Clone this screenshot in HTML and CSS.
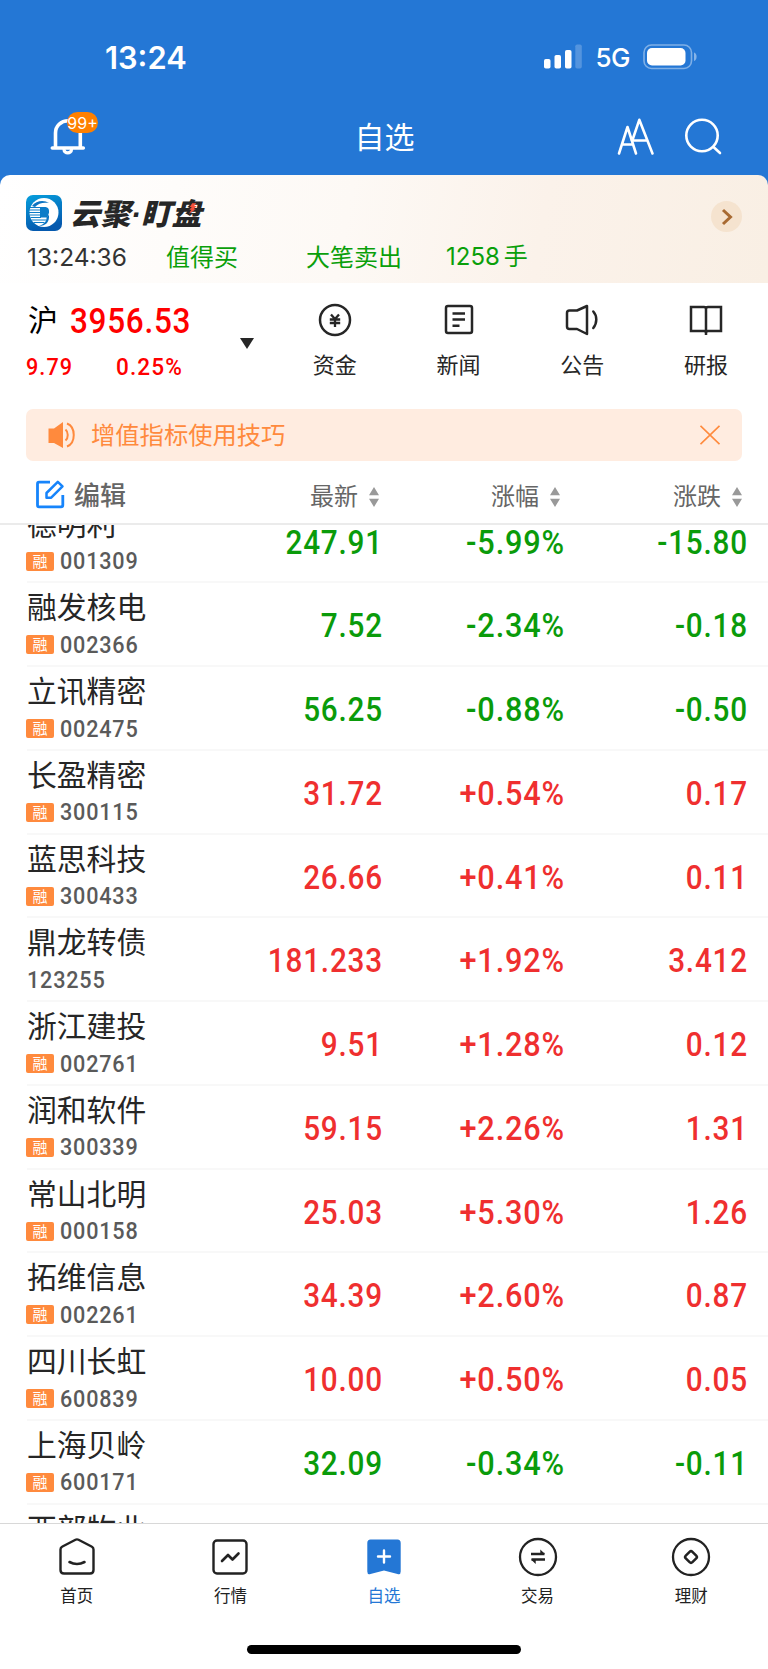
FILE: index.html
```html
<!DOCTYPE html>
<html lang="zh-CN">
<head>
    <meta charset="UTF-8">
    <meta name="viewport" content="width=device-width, initial-scale=1.0">
    <title>自选</title>
    <link rel="stylesheet" href="styles.css">
</head>
<body>
    <header class="header">
        <div class="status-bar">
            <span class="status-time">13:24</span>
            <div class="status-right">
                <svg class="signal" width="38" height="25" viewBox="0 0 38 25" fill="#fff">
                    <rect x="0" y="15" width="6.5" height="9.5" rx="1.8"/>
                    <rect x="10.5" y="11" width="6.5" height="13.5" rx="1.8"/>
                    <rect x="21" y="6" width="6.5" height="18.5" rx="1.8"/>
                    <rect x="31.3" y="0.5" width="6.5" height="24" rx="1.8" opacity="0.22"/>
                </svg>
                <span class="network">5G</span>
                <svg class="battery" width="55" height="26" viewBox="0 0 55 26">
                    <rect x="1" y="1" width="47.5" height="23.5" rx="7.5" fill="none" stroke="#fff" stroke-width="1.6" opacity="0.42"/>
                    <rect x="4" y="4" width="38.5" height="17.5" rx="5" fill="#fff"/>
                    <path d="M51 8.5c1.600 .6 2.600 2 2.600 4.200S52.600 16.500 51 17z" fill="#fff" opacity="0.45"/>
                </svg>
            </div>
        </div>
        <div class="nav-bar">
            <div class="bell">
                <svg width="36" height="38" viewBox="0 0 36 38" fill="none" stroke="#fff" stroke-width="3.6" stroke-linecap="round">
                    <path d="M5.500 29V15C5.500 8 11 2.800 18 2.800S30.300 8 30.300 15V29"/>
                    <path d="M2.300 30H33.300"/>
                    <path d="M14 31.500C14 36 21.500 36 21.500 31.500" stroke-width="3.200"/>
                </svg>
                <span class="bell-badge">99+</span>
            </div>
            <h1 class="nav-title">自选</h1>
            <div class="nav-actions">
                <svg width="38" height="38" viewBox="0 0 38 38" fill="none" stroke="#fff" stroke-width="2.600" stroke-linecap="round" stroke-linejoin="round">
                    <path d="M2 35.500L10.500 9L19 35.500M5.500 26.500H16"/>
                    <path d="M15.500 22L22.300 1.800L35.500 35.500M15 22.500H30"/>
                </svg>
                <svg width="38" height="38" viewBox="0 0 38 38" fill="none" stroke="#fff" stroke-width="2.600" stroke-linecap="round">
                    <circle cx="18" cy="17.500" r="15.700"/>
                    <path d="M29.500 29L36 35"/>
                </svg>
            </div>
        </div>
    </header>

    <section class="promo">
        <div class="promo-top">
            <svg class="promo-logo" width="36" height="36" viewBox="0 0 36 36">
                <defs>
                    <linearGradient id="logo-bg" x1="0" y1="0" x2="0.300" y2="1">
                        <stop offset="0" stop-color="#069fdd"/>
                        <stop offset="1" stop-color="#0559ae"/>
                    </linearGradient>
                </defs>
                <rect width="36" height="36" rx="7" fill="url(#logo-bg)"/>
                <circle cx="18" cy="17.500" r="14.500" fill="#fff"/>
                <path d="M14 12H19.500Q23 12.500 23 16V17.500Q22.500 21 20.500 22.500H14z" fill="#0c7cc8"/>
                <path d="M6 11C10 5.500 18 4.500 23 8C18 7 12 8 9 12M20.500 22C21 26 18 29.500 13 31C20 31 23.500 27 23 20" fill="#0c74c2"/>
                <path d="M3 12.500H14M3 15H14M3 17.500H14M3.500 20H14M4.500 22.500H15M5.500 25H20.500M7.500 27.500H18.500" stroke="#0c7cc8" stroke-width="1.100"/>
            </svg>
            <div class="promo-name">云聚<span class="promo-dot">·</span>盯盘
                <svg class="bolt" width="8" height="11" viewBox="0 0 10 13"><path d="M4 0H9L6.500 3.500H9.500L6 7.500H8.500L0 13L3 8H.5L3.500 4.500H1z" fill="#f4513b"/></svg>
            </div>
            <span class="promo-more">
                <svg width="12" height="18" viewBox="0 0 12 18" fill="none" stroke="#a86a32" stroke-width="3"><path d="M2 2L9.500 9L2 16"/></svg>
            </span>
        </div>
        <div class="promo-feed">
            <span class="feed-time">13:24:36</span>
            <span class="feed-stock">值得买</span>
            <span class="feed-event">大笔卖出</span>
            <span class="feed-volume">1258<span class="feed-unit">手</span></span>
        </div>
    </section>

    <section class="overview">
        <div class="index">
            <div class="index-main"><span class="index-name">沪</span><span class="index-value">3956.53</span></div>
            <div class="index-change"><span class="index-diff">9.79</span><span class="index-pct">0.25%</span></div>
            <span class="index-arrow"></span>
        </div>
        <div class="shortcuts">
            <div class="shortcut">
                <svg width="34" height="34" viewBox="0 0 34 34" fill="none" stroke="#262626" stroke-width="2.500">
                    <circle cx="17" cy="17" r="15"/>
                    <path d="M13 11.500L17 16L21 11.500M11.800 16.500H22.200M11.800 20H22.200M17 16V24" stroke-width="2.300"/>
                </svg>
                <span>资金</span>
            </div>
            <div class="shortcut">
                <svg width="34" height="34" viewBox="0 0 34 34" fill="none" stroke="#262626" stroke-width="2.500">
                    <rect x="4" y="3" width="26" height="27" rx="2"/>
                    <path d="M10.500 10.500H23M10.500 16.600H23M10.500 22.700H17.500"/>
                </svg>
                <span>新闻</span>
            </div>
            <div class="shortcut">
                <svg width="34" height="34" viewBox="0 0 34 34" fill="none" stroke="#262626" stroke-width="2.500" stroke-linejoin="round" stroke-linecap="round">
                    <path d="M4.500 7.500H12L22 3V31L12 26H4.500Q2 26 2 23.500V10Q2 7.500 4.500 7.500z"/>
                    <path d="M28.300 8.500C32.300 13 32.300 20 28.300 25"/>
                </svg>
                <span>公告</span>
            </div>
            <div class="shortcut">
                <svg width="34" height="34" viewBox="0 0 34 34" fill="none" stroke="#262626" stroke-width="2.500">
                    <path d="M2 4H15Q17 4 17 6Q17 4 19 4H32V28H19Q17 28 17 30Q17 28 15 28H2zM17 6V32"/>
                </svg>
                <span>研报</span>
            </div>
        </div>
    </section>

    <div class="notice">
        <svg width="28" height="28" viewBox="0 0 28 28" fill="none" stroke="#ff8a3d" stroke-width="2">
            <path d="M0.500 7.500H6L15 1V27L6 22H0.500z" fill="#ff8a3d" stroke="none"/>
            <path d="M17.500 8.500C20.500 11 20.500 17 17.500 19.500"/>
            <path d="M19 2.500C28 6 28 22 19 25.500"/>
        </svg>
        <span class="notice-text">增值指标使用技巧</span>
        <svg width="20" height="20" viewBox="0 0 20 20" stroke="#ff8a3d" stroke-width="1.700"><path d="M.5 .8L19.500 19.200M19.500 .8L.5 19.200"/></svg>
    </div>

    <div class="list-head">
        <div class="edit">
            <svg width="30" height="30" viewBox="0 0 30 30" fill="none" stroke="#1684fb" stroke-width="2.800" stroke-linejoin="round">
                <path d="M15 3.200H4Q2.500 3.200 2.500 5V26Q2.500 27.800 4 27.800H26Q27.800 27.800 27.800 26V16"/>
                <path d="M11.500 18.700V14L22.800 2.800L27.500 7.300L16.200 18.700z" stroke-width="2.500"/>
            </svg>
            <span>编辑</span>
        </div>
        <div class="sort"><span>最新</span><svg width="10" height="20" viewBox="0 0 10 20" fill="#999"><path d="M5 0L10 8.300H0zM0 11.700H10L5 20z"/></svg></div>
        <div class="sort"><span>涨幅</span><svg width="10" height="20" viewBox="0 0 10 20" fill="#999"><path d="M5 0L10 8.300H0zM0 11.700H10L5 20z"/></svg></div>
        <div class="sort"><span>涨跌</span><svg width="10" height="20" viewBox="0 0 10 20" fill="#999"><path d="M5 0L10 8.300H0zM0 11.700H10L5 20z"/></svg></div>
    </div>

    <main class="list">
        <div class="row down">
            <div class="stock"><div class="name">德明利</div><div class="code"><i class="tag">融</i><span>001309</span></div></div>
            <div class="num">247.91</div><div class="num">-5.99%</div><div class="num">-15.80</div>
        </div>
        <div class="row down">
            <div class="stock"><div class="name">融发核电</div><div class="code"><i class="tag">融</i><span>002366</span></div></div>
            <div class="num">7.52</div><div class="num">-2.34%</div><div class="num">-0.18</div>
        </div>
        <div class="row down">
            <div class="stock"><div class="name">立讯精密</div><div class="code"><i class="tag">融</i><span>002475</span></div></div>
            <div class="num">56.25</div><div class="num">-0.88%</div><div class="num">-0.50</div>
        </div>
        <div class="row up">
            <div class="stock"><div class="name">长盈精密</div><div class="code"><i class="tag">融</i><span>300115</span></div></div>
            <div class="num">31.72</div><div class="num">+0.54%</div><div class="num">0.17</div>
        </div>
        <div class="row up">
            <div class="stock"><div class="name">蓝思科技</div><div class="code"><i class="tag">融</i><span>300433</span></div></div>
            <div class="num">26.66</div><div class="num">+0.41%</div><div class="num">0.11</div>
        </div>
        <div class="row up">
            <div class="stock"><div class="name">鼎龙转债</div><div class="code"><span>123255</span></div></div>
            <div class="num">181.233</div><div class="num">+1.92%</div><div class="num">3.412</div>
        </div>
        <div class="row up">
            <div class="stock"><div class="name">浙江建投</div><div class="code"><i class="tag">融</i><span>002761</span></div></div>
            <div class="num">9.51</div><div class="num">+1.28%</div><div class="num">0.12</div>
        </div>
        <div class="row up">
            <div class="stock"><div class="name">润和软件</div><div class="code"><i class="tag">融</i><span>300339</span></div></div>
            <div class="num">59.15</div><div class="num">+2.26%</div><div class="num">1.31</div>
        </div>
        <div class="row up">
            <div class="stock"><div class="name">常山北明</div><div class="code"><i class="tag">融</i><span>000158</span></div></div>
            <div class="num">25.03</div><div class="num">+5.30%</div><div class="num">1.26</div>
        </div>
        <div class="row up">
            <div class="stock"><div class="name">拓维信息</div><div class="code"><i class="tag">融</i><span>002261</span></div></div>
            <div class="num">34.39</div><div class="num">+2.60%</div><div class="num">0.87</div>
        </div>
        <div class="row up">
            <div class="stock"><div class="name">四川长虹</div><div class="code"><i class="tag">融</i><span>600839</span></div></div>
            <div class="num">10.00</div><div class="num">+0.50%</div><div class="num">0.05</div>
        </div>
        <div class="row down">
            <div class="stock"><div class="name">上海贝岭</div><div class="code"><i class="tag">融</i><span>600171</span></div></div>
            <div class="num">32.09</div><div class="num">-0.34%</div><div class="num">-0.11</div>
        </div>
        <div class="row">
            <div class="stock"><div class="name">西部牧业</div></div>
        </div>
    </main>

    <nav class="tab-bar">
        <div class="tabs">
            <div class="tab">
                <svg width="40" height="40" viewBox="0 0 40 40" fill="none" stroke="#222" stroke-width="2.400" stroke-linecap="round" stroke-linejoin="round">
                    <path d="M3.500 12.500Q3.500 10.500 5 9.800L18.500 2.800Q20 2 21.500 2.800L35 9.800Q36.500 10.500 36.500 12.500V33Q36.500 36.500 33 36.500H7Q3.500 36.500 3.500 33z"/>
                    <path d="M12.500 25Q20 29 27.500 25" stroke-width="2.600"/>
                </svg>
                <span>首页</span>
            </div>
            <div class="tab">
                <svg width="40" height="40" viewBox="0 0 40 40" fill="none" stroke="#222" stroke-width="2.400" stroke-linecap="round" stroke-linejoin="round">
                    <rect x="3.500" y="3.500" width="33" height="33" rx="3.500"/>
                    <path d="M12 24L18 18L22.500 22.500L28.500 16.500" stroke-width="2.600"/>
                </svg>
                <span>行情</span>
            </div>
            <div class="tab active">
                <svg width="40" height="40" viewBox="0 0 40 40">
                    <path d="M6.500 2.500H33.500Q36.700 2.500 36.700 6V34.500Q36.700 38 33.500 37L20 33.500L6.500 37Q3.300 38 3.300 34.500V6Q3.300 2.500 6.500 2.500z" fill="#2477d5"/>
                    <path d="M20 13.500V25.500M14 19.500H26" stroke="#fff" stroke-width="2.400" stroke-linecap="round"/>
                </svg>
                <span>自选</span>
            </div>
            <div class="tab">
                <svg width="40" height="40" viewBox="0 0 40 40" fill="none" stroke="#222" stroke-width="2.300">
                    <circle cx="20" cy="20" r="18"/>
                    <path d="M13 17H26.500M27 22.500H13.500" stroke-width="2.700"/>
                    <path d="M22.300 17V12.500L27 17zM17.700 22.500V27L13 22.500z" fill="#222" stroke="none"/>
                </svg>
                <span>交易</span>
            </div>
            <div class="tab">
                <svg width="40" height="40" viewBox="0 0 40 40" fill="none" stroke="#222" stroke-width="2.300">
                    <circle cx="20" cy="20" r="18"/>
                    <rect x="15.300" y="15.300" width="9.400" height="9.400" rx="2" transform="rotate(45 20 20)" stroke-width="2.500"/>
                </svg>
                <span>理财</span>
            </div>
        </div>
        <div class="home-indicator"></div>
    </nav>
</body>
</html>
```

FILE: styles.css
```css
* {
    box-sizing: border-box;
}
body {
    margin: 0;
    width: 768px;
    height: 1669px;
    overflow: hidden;
    display: flex;
    flex-direction: column;
    background: #2477d5;
    font-family: "Noto Sans CJK SC", sans-serif;
    color: #262626;
}
svg {
    display: block;
    flex-shrink: 0;
}

/* header */
.header {
    height: 175px;
    flex-shrink: 0;
    color: #fff;
}
.status-bar {
    height: 114px;
    padding: 0 70px 0 105px;
    display: flex;
    align-items: center;
    justify-content: space-between;
    font-family: Inter, sans-serif;
}
.status-time {
    font-size: 30.8px;
    font-weight: 600;
}
.status-right {
    display: flex;
    align-items: center;
    margin-top: -1px;
}
.network {
    font-size: 26px;
    font-weight: 500;
    letter-spacing: -0.5px;
    margin: 2px 13px 0 13px;
}
.nav-bar {
    height: 46px;
    padding: 0 32px 0 50px;
    display: grid;
    grid-template-columns: 1fr auto 1fr;
    align-items: center;
}
.bell {
    position: relative;
}
.bell-badge {
    position: absolute;
    left: 17px;
    top: -6px;
    width: 31px;
    height: 21px;
    border-radius: 11px;
    background: #ff8000;
    font: 16px/22px Inter, sans-serif;
    text-align: center;
}
.nav-title {
    margin: -5px 0 0 -17px;
    font-size: 30px;
    font-weight: 400;
    line-height: 44px;
}
.nav-actions {
    display: flex;
    justify-content: flex-end;
    gap: 29px;
    margin-right: 14px;
}

/* promo card */
.promo {
    height: 108px;
    flex-shrink: 0;
    padding: 20px 26px 0;
    border-radius: 10px 10px 0 0;
    background: linear-gradient(100deg, #fff 0%, #fdf9f5 45%, #fbf2ea 70%, #f9efe4 100%);
}
.promo-top {
    display: flex;
    align-items: center;
    height: 36px;
}
.promo-name {
    position: relative;
    margin-left: 8px;
    font-size: 30px;
    font-weight: 800;
    font-style: italic;
    line-height: 36px;
    letter-spacing: 0.4px;
}
.promo-dot {
    font-family: "Liberation Sans", sans-serif;
}
.bolt {
    position: absolute;
    left: 119px;
    top: 9px;
}
.promo-more {
    width: 31px;
    height: 31px;
    margin: 7px 0 0 auto;
    border-radius: 50%;
    background: #f5e3cf;
    display: flex;
    align-items: center;
    justify-content: center;
}
.promo-feed {
    display: flex;
    margin-top: 7px;
    font-size: 24px;
    line-height: 36px;
    color: #0a9f0a;
}
.feed-time {
    width: 140px;
    padding: 1px 0 0 1px;
    font-family: Inter, sans-serif;
    font-size: 24.5px;
    color: #333;
}
.feed-stock {
    width: 140px;
}
.feed-event {
    width: 140px;
}
.feed-volume {
    padding-top: 1px;
    font-family: Inter, "Noto Sans CJK SC", sans-serif;
}
.feed-unit {
    margin-left: 4px;
}

/* index and shortcuts */
.overview {
    height: 126px;
    flex-shrink: 0;
    display: flex;
    background: #fff;
}
.index {
    position: relative;
    width: 273px;
    padding: 17px 0 0 26px;
    font-family: Roboto, sans-serif;
    font-weight: 500;
    color: #f00;
}
.index-main {
    display: flex;
    height: 40px;
    align-items: center;
}
.index-name {
    width: 44px;
    padding-left: 2px;
    margin-top: -4px;
    font-family: "Noto Sans CJK SC", sans-serif;
    font-size: 30px;
    line-height: 40px;
    font-weight: 400;
    color: #000;
}
.index-value {
    font-size: 35px;
    letter-spacing: 0.8px;
    padding-top: 3px;
    transform: scaleX(0.9);
    transform-origin: left;
}
.index-change {
    display: flex;
    margin-top: 13px;
    font-size: 24px;
    line-height: 28px;
    letter-spacing: 1.2px;
}
.index-diff {
    width: 90px;
    transform: scaleX(0.9);
    transform-origin: left;
}
.index-pct {
    transform: scaleX(0.94);
    transform-origin: left;
}
.index-arrow {
    position: absolute;
    left: 240px;
    top: 55px;
    border: 7px solid transparent;
    border-top: 11px solid #262626;
    border-bottom: 0;
}
.shortcuts {
    flex: 1;
    display: grid;
    grid-template-columns: repeat(4, 1fr);
}
.shortcut {
    display: flex;
    flex-direction: column;
    align-items: center;
    gap: 10px;
    padding-top: 20px;
    font-size: 22px;
    line-height: 32px;
}

/* notice */
.notice {
    height: 52px;
    flex-shrink: 0;
    padding: 0 22px;
    display: flex;
    align-items: center;
    background: #ffece0;
    border-radius: 7px;
    box-shadow: 0 0 0 30px #fff;
    clip-path: inset(0 -26px);
    margin: 0 26px;
    color: #ff8a3d;
}
.notice-text {
    flex: 1;
    margin: -2px 0 0 15px;
    font-size: 24.3px;
    line-height: 36px;
}

/* watch list */
.list-head {
    height: 64px;
    flex-shrink: 0;
    padding: 6px 26px 0 35px;
    display: grid;
    grid-template-columns: 1fr 181px 181px 182px;
    align-items: center;
    background: #fff;
    border-bottom: 2px solid #ebebeb;
    color: #666;
}
.edit {
    display: flex;
    align-items: center;
    gap: 9px;
    font-size: 26px;
    font-weight: 500;
    line-height: 34px;
    margin-top: -3px;
}
.edit span {
    padding-top: 1px;
}
.sort {
    display: flex;
    align-items: center;
    justify-content: flex-end;
    gap: 11px;
    font-size: 24px;
    line-height: 36px;
}
.sort span {
    margin-top: -1px;
}
.sort svg {
    margin-top: 3px;
}
.list {
    height: 998px;
    flex-shrink: 0;
    overflow: hidden;
    background: #fff;
}
.row {
    height: 83.78px;
    margin-left: 27px;
    padding-right: 20px;
    display: grid;
    grid-template-columns: 1fr 210px 182px 183px;
    border-bottom: 2px solid #f8f8f8;
}
.row:first-child {
    margin-top: -25.5px;
}
.name {
    font-size: 29.8px;
    line-height: 40px;
    padding-top: 2px;
}
.code {
    display: flex;
    align-items: center;
    height: 34px;
    margin-top: 2.5px;
    font-family: Roboto, sans-serif;
    font-size: 24px;
    font-weight: 500;
    letter-spacing: 0.9px;
    color: #5a5a5a;
}
.code span {
    transform: scaleX(0.9);
    transform-origin: left;
}
.tag {
    width: 28px;
    height: 19px;
    margin: 0 6px 0 -1px;
    background: #ff8a3d;
    border-radius: 2px;
    color: #fff;
    font: 15px/18px "Noto Sans CJK SC", sans-serif;
    letter-spacing: 0;
    text-align: center;
}
/* narrow digits, close to DIN */
.num {
    font-family: Roboto, sans-serif;
    font-size: 33px;
    font-weight: 500;
    line-height: 86px;
    letter-spacing: 0.9px;
    text-align: right;
    transform: scaleX(0.9);
    transform-origin: right;
}
.num:nth-child(3) {
    transform: scaleX(0.93);
}
.up .num {
    color: #ef2f2f;
}
.down .num {
    color: #0a9b0a;
}

/* bottom tabs */
.tab-bar {
    height: 146px;
    flex-shrink: 0;
    background: #fff;
    border-top: 1px solid #d8d8d8;
}
.tabs {
    display: grid;
    grid-template-columns: repeat(5, 1fr);
    padding-top: 13px;
}
.tab {
    display: flex;
    flex-direction: column;
    align-items: center;
    gap: 6px;
    font-size: 16.5px;
    line-height: 24px;
    color: #222;
}
.active {
    color: #2477d5;
}
.home-indicator {
    width: 274px;
    height: 9px;
    margin: 38px auto 0;
    border-radius: 5px;
    background: #000;
}
```
